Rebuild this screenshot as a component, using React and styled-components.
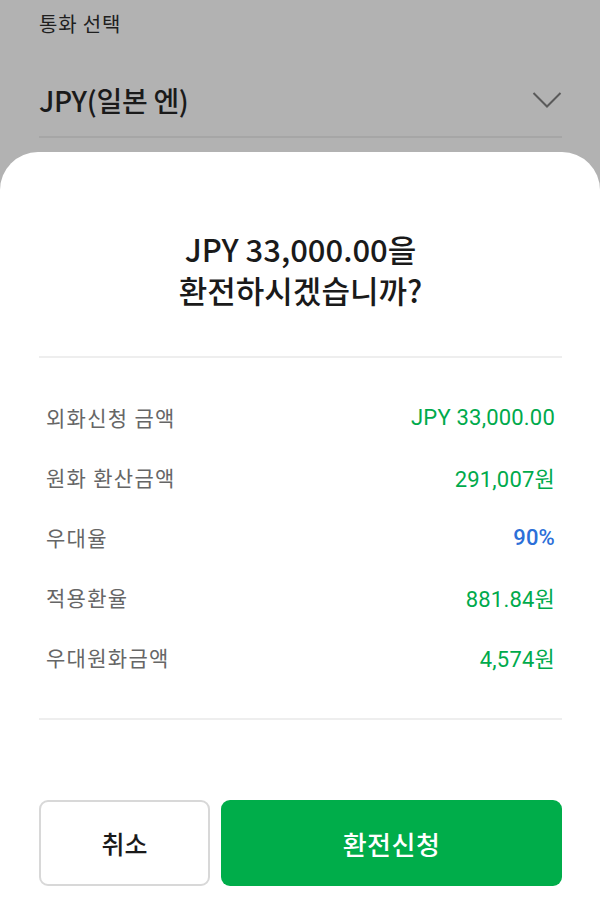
import React from "react";
import styled, { createGlobalStyle } from "styled-components";

const Global = createGlobalStyle`
  html, body { margin: 0; padding: 0; }
  body { font-family: "Noto Sans CJK KR", "Noto Sans", sans-serif; background: #b2b2b2; }
  * { box-sizing: border-box; }
`;

const Page = styled.div`
  width: 600px;
  height: 904px;
  background: #b2b2b2;
  display: flex;
  flex-direction: column;
  overflow: hidden;
`;

const Behind = styled.div`
  padding: 0 38px 0 39px;
  display: flex;
  flex-direction: column;
`;

const FieldLabel = styled.div`
  font-size: 20px;
  line-height: 28px;
  margin-top: 10px;
  color: #1f1f1f;
  letter-spacing: 0.8px;
`;

const SelectRow = styled.div`
  display: flex;
  align-items: center;
  justify-content: space-between;
  height: 100px;
  padding-top: 26px;
  border-bottom: 2px solid #a6a6a6;
  font-size: 28px;
  font-weight: 500;
  color: #1a1a1a;
  letter-spacing: -0.3px;
`;

const Sheet = styled.div`
  flex: 1;
  margin-top: 14px;
  background: #fff;
  border-radius: 38px 38px 0 0;
  padding: 76px 38px 0 39px;
  display: flex;
  flex-direction: column;
`;

const Title = styled.h2`
  margin: 0;
  text-align: center;
  font-size: 31px;
  line-height: 41px;
  font-weight: 500;
  color: #1a1a1a;
  letter-spacing: 0;
`;

const Divider = styled.div`
  height: 2px;
  background: #eeeeee;
  margin-top: ${(p) => p.$mt || 0}px;
`;

const List = styled.div`
  display: flex;
  flex-direction: column;
  padding: 29px 7px 31px 7px;
`;

const Row = styled.div`
  display: flex;
  align-items: center;
  justify-content: space-between;
  height: 60px;
`;

const Label = styled.span`
  font-size: 21px;
  color: #666;
  font-weight: 400;
  letter-spacing: 1.3px;
`;

const Value = styled.span`
  font-family: Roboto, "Noto Sans CJK KR", sans-serif;
  font-size: 22px;
  color: ${(p) => (p.$blue ? "#2c6fd8" : "#00aa4c")};
  font-weight: ${(p) => (p.$blue ? 500 : 400)};
  letter-spacing: 0.2px;
`;

const Buttons = styled.div`
  display: flex;
  gap: 11px;
  margin-top: 80px;
`;

const Btn = styled.button`
  height: 86px;
  border-radius: 9px;
  font-family: "Noto Sans CJK KR", sans-serif;
  font-weight: 500;
  display: flex;
  align-items: center;
  justify-content: center;
  cursor: pointer;
  ${(p) =>
    p.$primary
      ? `flex: 1; background: #00ad4a; color: #fff; border: none; font-size: 26px; letter-spacing: 0.5px;`
      : `width: 171px; background: #fff; color: #1a1a1a; border: 2px solid #d8d8d8; font-size: 25px;`}
`;

const rows = [
  ["외화신청 금액", "JPY 33,000.00"],
  ["원화 환산금액", "291,007원"],
  ["우대율", "90%", true],
  ["적용환율", "881.84원"],
  ["우대원화금액", "4,574원"],
];

export default function App() {
  return (
    <Page>
      <Global />
      <Behind>
        <FieldLabel>통화 선택</FieldLabel>
        <SelectRow>
          <span>JPY(일본 엔)</span>
          <svg width="30" height="18" viewBox="0 0 30 18">
            <path d="M1.5 2 L15 15.5 L28.5 2" fill="none" stroke="#5a5a5a" strokeWidth="2" />
          </svg>
        </SelectRow>
      </Behind>
      <Sheet>
        <Title>
          JPY 33,000.00을
          <br />
          환전하시겠습니까?
        </Title>
        <Divider $mt={46} />
        <List>
          {rows.map(([l, v, blue]) => (
            <Row key={l}>
              <Label>{l}</Label>
              <Value $blue={blue}>{v}</Value>
            </Row>
          ))}
        </List>
        <Divider />
        <Buttons>
          <Btn>취소</Btn>
          <Btn $primary>환전신청</Btn>
        </Buttons>
      </Sheet>
    </Page>
  );
}
